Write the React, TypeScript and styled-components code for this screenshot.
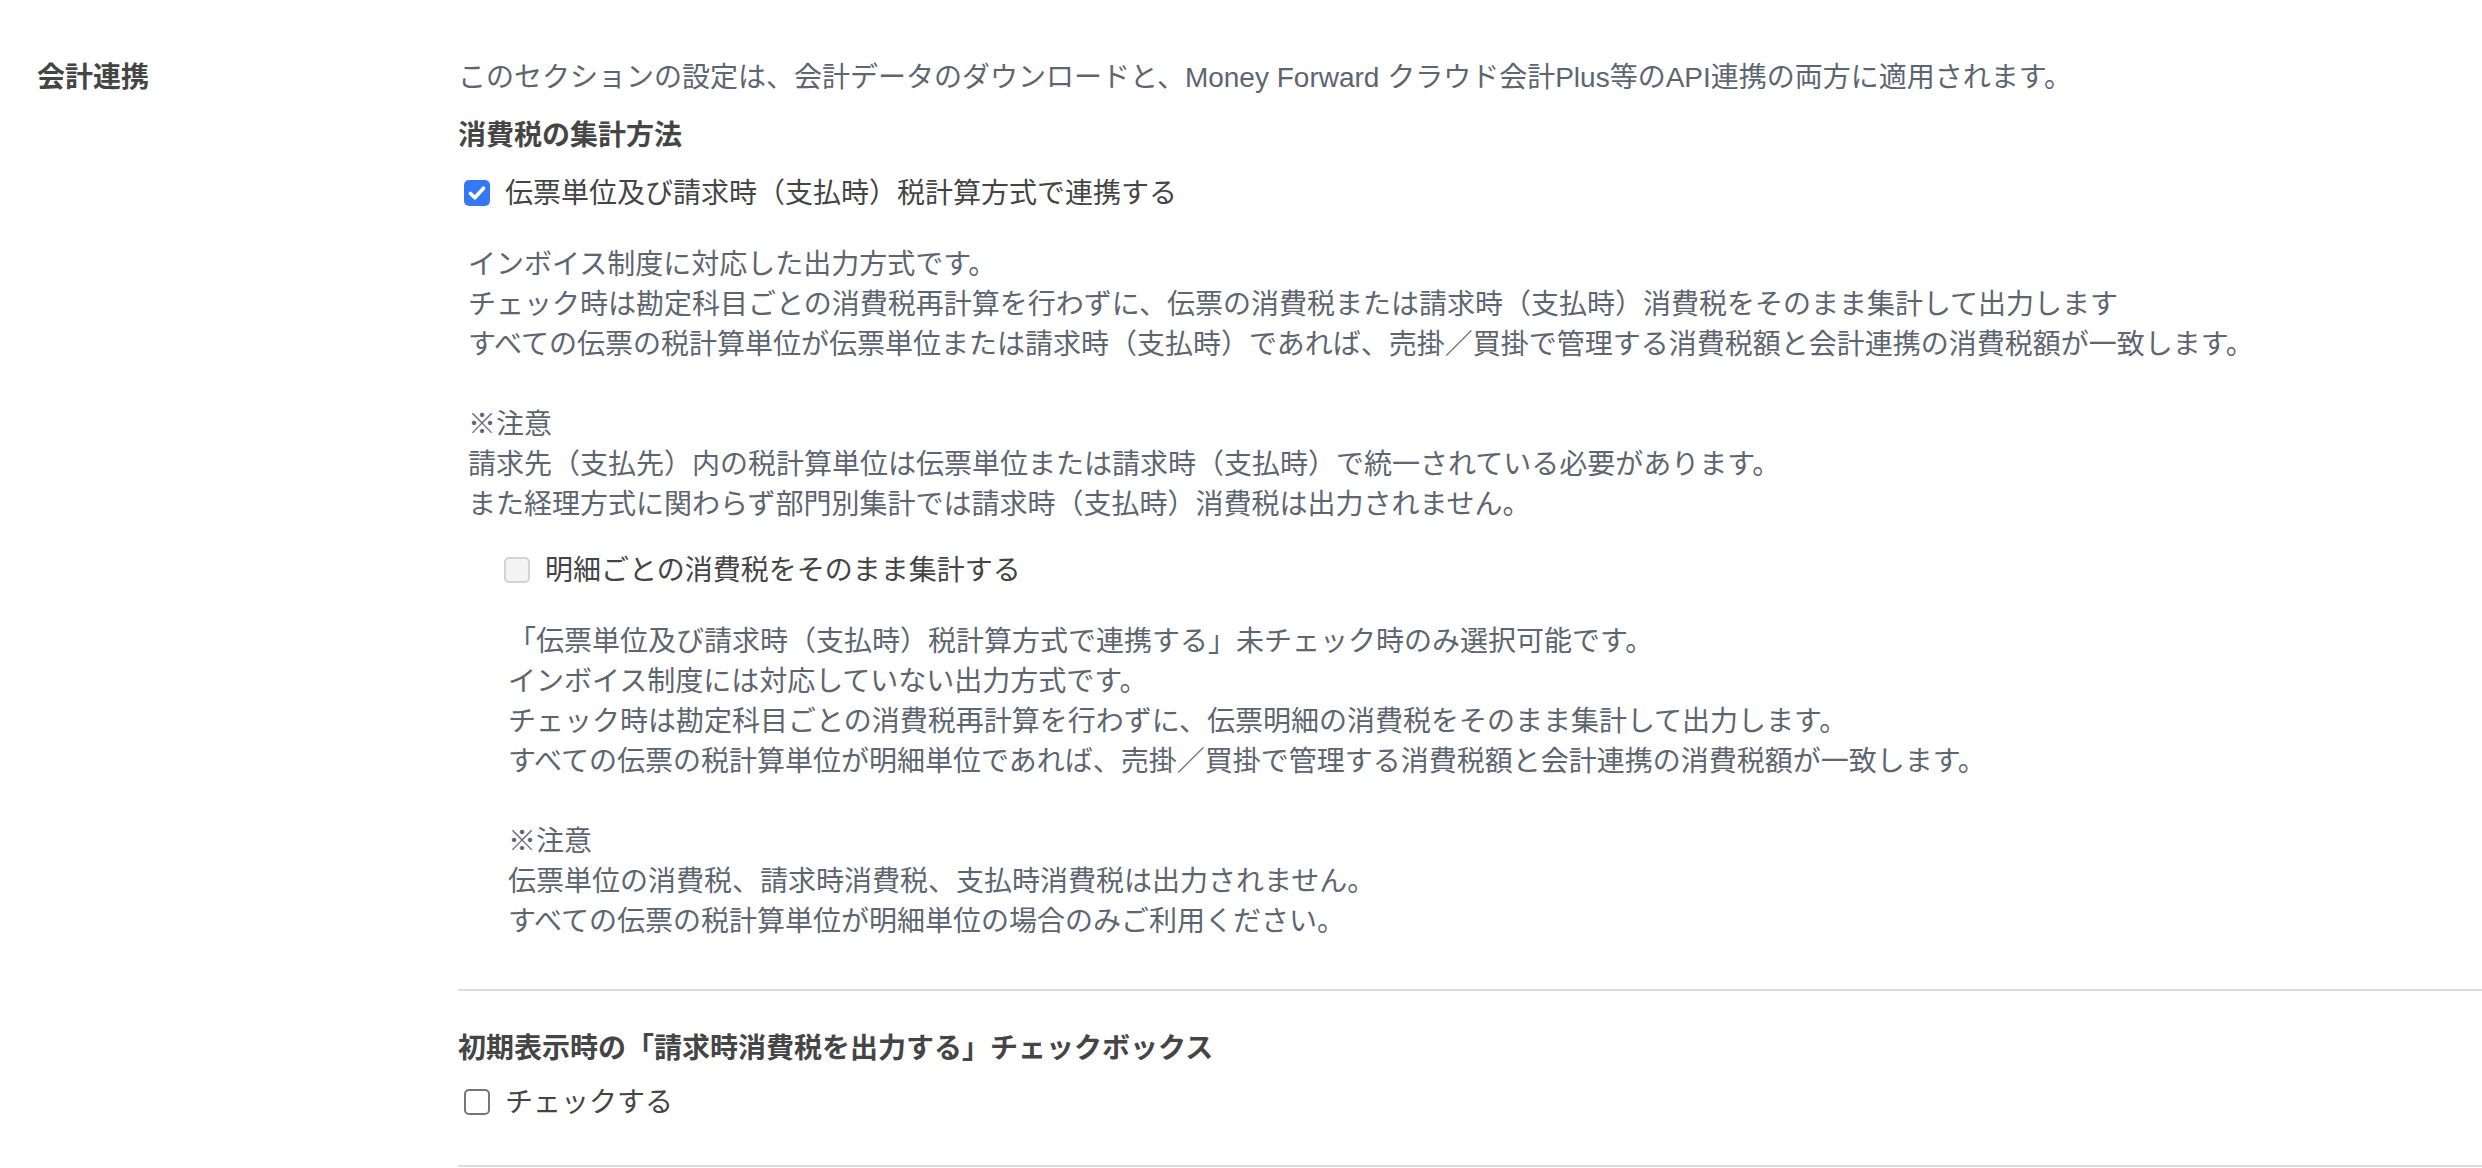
import styled, { createGlobalStyle } from 'styled-components';

const GlobalStyle = createGlobalStyle`
  html, body {
    margin: 0;
    padding: 0;
    background: #fff;
  }
  body {
    font-family: "Liberation Sans", "Noto Sans CJK JP", sans-serif;
    font-size: 28px;
    line-height: 40px;
    color: #444;
  }
`;

type CheckProps = {
  checked?: boolean;
  disabled?: boolean;
  label: string;
};

function Check({ checked, disabled, label }: CheckProps) {
  return (
    <CheckRow>
      <Box $checked={checked} $disabled={disabled}>
        {checked && (
          <svg width="26" height="26" viewBox="0 0 26 26">
            <path
              d="M6.5 13.5 L10.8 17.8 L19.5 8.2"
              fill="none"
              stroke="#fff"
              strokeWidth="3.6"
              strokeLinecap="round"
              strokeLinejoin="round"
            />
          </svg>
        )}
      </Box>
      <CheckLabel>{label}</CheckLabel>
    </CheckRow>
  );
}

export default function App() {
  return (
    <>
      <GlobalStyle />
      <Section>
        <SectionLabel>会計連携</SectionLabel>
        <Content>
          <Lead>
            このセクションの設定は、会計データのダウンロードと、Money Forward
            クラウド会計Plus等のAPI連携の両方に適用されます。
          </Lead>

          <Group>
            <GroupTitle>消費税の集計方法</GroupTitle>
            <Check checked label="伝票単位及び請求時（支払時）税計算方式で連携する" />
            <Note>
              {`インボイス制度に対応した出力方式です。
チェック時は勘定科目ごとの消費税再計算を行わずに、伝票の消費税または請求時（支払時）消費税をそのまま集計して出力します
すべての伝票の税計算単位が伝票単位または請求時（支払時）であれば、売掛／買掛で管理する消費税額と会計連携の消費税額が一致します。

※注意
請求先（支払先）内の税計算単位は伝票単位または請求時（支払時）で統一されている必要があります。
また経理方式に関わらず部門別集計では請求時（支払時）消費税は出力されません。`}
            </Note>

            <SubGroup>
              <Check disabled label="明細ごとの消費税をそのまま集計する" />
              <Note>
                {`「伝票単位及び請求時（支払時）税計算方式で連携する」未チェック時のみ選択可能です。
インボイス制度には対応していない出力方式です。
チェック時は勘定科目ごとの消費税再計算を行わずに、伝票明細の消費税をそのまま集計して出力します。
すべての伝票の税計算単位が明細単位であれば、売掛／買掛で管理する消費税額と会計連携の消費税額が一致します。

※注意
伝票単位の消費税、請求時消費税、支払時消費税は出力されません。
すべての伝票の税計算単位が明細単位の場合のみご利用ください。`}
              </Note>
            </SubGroup>
          </Group>

          <Divider />

          <Group>
            <GroupTitle $second>初期表示時の「請求時消費税を出力する」チェックボックス</GroupTitle>
            <Check label="チェックする" />
          </Group>

          <Divider $last />
        </Content>
      </Section>
    </>
  );
}

const Section = styled.section`
  display: grid;
  grid-template-columns: 421px 1fr;
  padding: 58px 0 0 37px;
`;

const SectionLabel = styled.h2`
  margin: 0;
  font-size: 28px;
  line-height: 40px;
  font-weight: 700;
  color: #454545;
`;

const Content = styled.div`
  display: flex;
  flex-direction: column;
  min-width: 0;
`;

const Lead = styled.p`
  margin: 0;
  color: #5d6570;
`;

const Group = styled.div`
  display: flex;
  flex-direction: column;
`;

const GroupTitle = styled.h3<{ $second?: boolean }>`
  margin: ${(p) => (p.$second ? '38px 0 14px' : '18px 0 18px')};
  font-size: 28px;
  line-height: 40px;
  font-weight: 700;
  color: #454545;
`;

const CheckRow = styled.label`
  display: flex;
  align-items: center;
  gap: 15px;
  padding-left: 6px;
  height: 40px;
  color: #444;
`;

const Box = styled.span<{ $checked?: boolean; $disabled?: boolean }>`
  box-sizing: border-box;
  flex: none;
  width: 26px;
  height: 26px;
  margin-top: -3px;
  border-radius: 5px;
  display: inline-flex;
  align-items: center;
  justify-content: center;
  background: ${(p) => (p.$checked ? '#3478f6' : p.$disabled ? '#f4f4f4' : '#fff')};
  border: ${(p) =>
    p.$checked ? 'none' : p.$disabled ? '2px solid #d3d3d3' : '2px solid #767676'};
`;

const CheckLabel = styled.span`
  white-space: nowrap;
`;

const Note = styled.p`
  margin: 31px 0 0;
  padding-left: 10px;
  white-space: pre-line;
  color: #5d6570;
`;

const SubGroup = styled.div`
  display: flex;
  flex-direction: column;
  margin: 26px 0 0 40px;
`;

const Divider = styled.hr<{ $last?: boolean }>`
  margin: ${(p) => (p.$last ? '42px 0 0' : '47px 0 0')};
  border: none;
  height: 2px;
  background: #d9dde1;
`;
